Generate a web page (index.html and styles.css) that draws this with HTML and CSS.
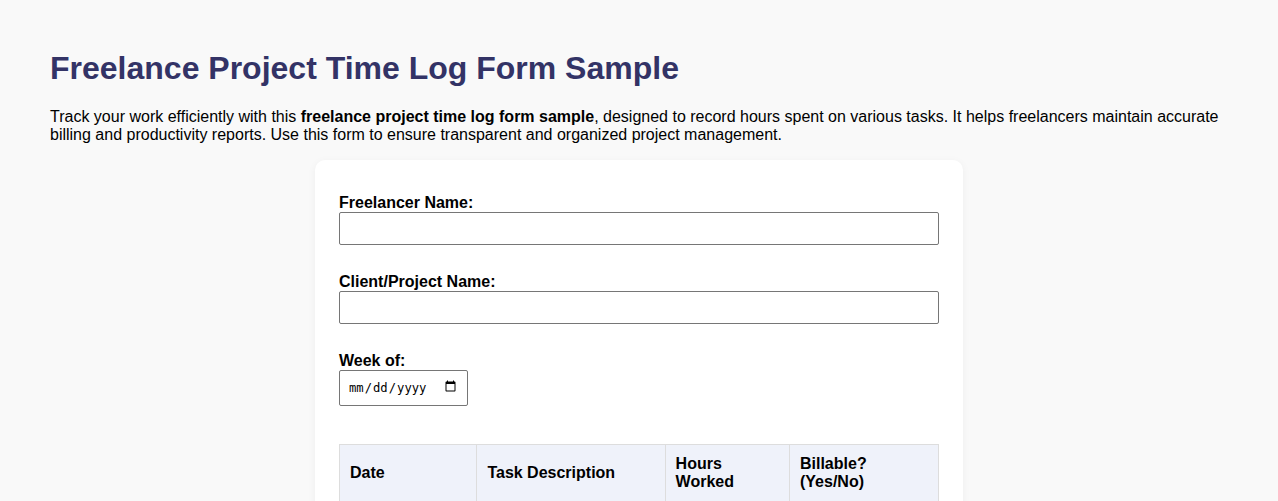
FILE: index.html
```html
<!DOCTYPE html>
<html lang="en">
<head>
<meta charset="utf-8">
<title>Freelance Project Time Log Form Sample</title>
<link rel="stylesheet" href="styles.css">
</head>
<body>
<h1>Freelance Project Time Log Form Sample</h1>
<p class="intro">Track your work efficiently with this <strong>freelance project time log form sample</strong>, designed to record hours spent on various tasks. It helps freelancers maintain accurate billing and productivity reports. Use this form to ensure transparent and organized project management.</p>
<form class="card">
  <div class="field"><label for="n">Freelancer Name:</label><input id="n" type="text"></div>
  <div class="field"><label for="c">Client/Project Name:</label><input id="c" type="text"></div>
  <div class="field"><label for="w">Week of:</label><input id="w" type="date" class="date"></div>
  <table>
    <thead><tr><th class="c1">Date</th><th class="c2">Task Description</th><th class="c3">Hours Worked</th><th class="c4">Billable? (Yes/No)</th></tr></thead>
    <tbody><tr><td><input type="date"></td><td><input type="text"></td><td><input type="text"></td><td><input type="text"></td></tr></tbody>
  </table>
</form>
</body>
</html>
```
FILE: styles.css
```css
* { box-sizing: border-box; }
body {
  margin: 0;
  padding: 50px 50px 32px;
  background: #f9f9f9;
  color: #000;
  font-family: "Liberation Sans", Arial, sans-serif;
  font-size: 16px;
  line-height: 18px;
}
h1 {
  margin: 0 0 21px;
  font-size: 32px;
  line-height: 37px;
  color: #333366;
}
.intro { margin: 0 0 16px; }
.card {
  width: 648px;
  margin: 0 auto;
  padding: 34px 24px 24px;
  background: #fff;
  border-radius: 10px;
  box-shadow: 0 2px 8px rgba(0,0,0,0.05);
}
.field { margin-bottom: 28px; }
label { display: block; font-weight: 700; }
.field input {
  display: block;
  width: 100%;
  height: 33px;
  padding: 8px;
  border: 1px solid #767676;
  border-radius: 2px;
  background: #fff;
  font-size: 13px;
}
.field input.date {
  width: 129px;
  height: 36px;
  font-family: "DejaVu Sans Mono", monospace;
  font-size: 12.2px;
}
.date::-webkit-calendar-picker-indicator {
  margin-top: -3px;
  width: 13px;
  height: 14px;
}
table { width: 600px; margin-top: 38px; border-collapse: collapse; table-layout: fixed; }
th, td { border: 1px solid #ddd; padding: 10px; text-align: left; }
th { background: #eff2fa; font-weight: 700; }
.c1 { width: 137.4px; } .c2 { width: 188.2px; } .c3 { width: 124.4px; } .c4 { width: 149px; }
td input { width: 100%; }
```
